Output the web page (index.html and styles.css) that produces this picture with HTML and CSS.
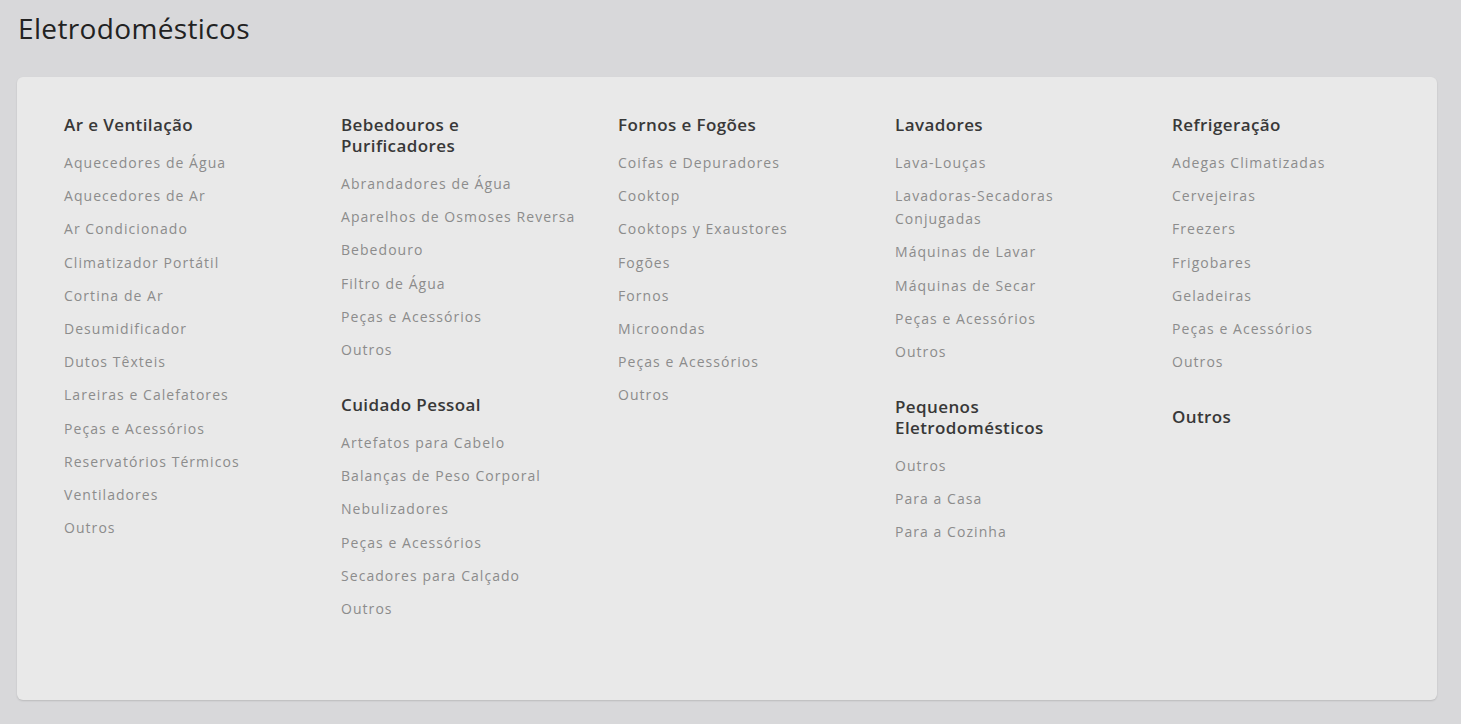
FILE: index.html
```html
<!DOCTYPE html>
<html lang="pt-BR">
<head>
<meta charset="utf-8">
<link rel="stylesheet" href="styles.css">
<title>Eletrodomésticos</title>
</head>
<body>
<h1 class="title">Eletrodomésticos</h1>
<div class="card">
  <div class="col">
    <div class="group">
      <h2 class="group-title">Ar e Ventilação</h2>
      <ul class="list">
        <li>Aquecedores de Água</li>
        <li>Aquecedores de Ar</li>
        <li>Ar Condicionado</li>
        <li>Climatizador Portátil</li>
        <li>Cortina de Ar</li>
        <li>Desumidificador</li>
        <li>Dutos Têxteis</li>
        <li>Lareiras e Calefatores</li>
        <li>Peças e Acessórios</li>
        <li>Reservatórios Térmicos</li>
        <li>Ventiladores</li>
        <li>Outros</li>
      </ul>
    </div>
  </div>
  <div class="col">
    <div class="group">
      <h2 class="group-title">Bebedouros e Purificadores</h2>
      <ul class="list">
        <li>Abrandadores de Água</li>
        <li>Aparelhos de Osmoses Reversa</li>
        <li>Bebedouro</li>
        <li>Filtro de Água</li>
        <li>Peças e Acessórios</li>
        <li>Outros</li>
      </ul>
    </div>
    <div class="group">
      <h2 class="group-title">Cuidado Pessoal</h2>
      <ul class="list">
        <li>Artefatos para Cabelo</li>
        <li>Balanças de Peso Corporal</li>
        <li>Nebulizadores</li>
        <li>Peças e Acessórios</li>
        <li>Secadores para Calçado</li>
        <li>Outros</li>
      </ul>
    </div>
  </div>
  <div class="col">
    <div class="group">
      <h2 class="group-title">Fornos e Fogões</h2>
      <ul class="list">
        <li>Coifas e Depuradores</li>
        <li>Cooktop</li>
        <li>Cooktops y Exaustores</li>
        <li>Fogões</li>
        <li>Fornos</li>
        <li>Microondas</li>
        <li>Peças e Acessórios</li>
        <li>Outros</li>
      </ul>
    </div>
  </div>
  <div class="col">
    <div class="group">
      <h2 class="group-title">Lavadores</h2>
      <ul class="list">
        <li>Lava-Louças</li>
        <li>Lavadoras-Secadoras Conjugadas</li>
        <li>Máquinas de Lavar</li>
        <li>Máquinas de Secar</li>
        <li>Peças e Acessórios</li>
        <li>Outros</li>
      </ul>
    </div>
    <div class="group">
      <h2 class="group-title">Pequenos Eletrodomésticos</h2>
      <ul class="list">
        <li>Outros</li>
        <li>Para a Casa</li>
        <li>Para a Cozinha</li>
      </ul>
    </div>
  </div>
  <div class="col">
    <div class="group">
      <h2 class="group-title">Refrigeração</h2>
      <ul class="list">
        <li>Adegas Climatizadas</li>
        <li>Cervejeiras</li>
        <li>Freezers</li>
        <li>Frigobares</li>
        <li>Geladeiras</li>
        <li>Peças e Acessórios</li>
        <li>Outros</li>
      </ul>
    </div>
    <div class="group">
      <h2 class="group-title">Outros</h2>
    </div>
  </div>
</div>
</body>
</html>
```
FILE: styles.css
```css
* { box-sizing: border-box; }
html, body { margin: 0; padding: 0; }
body {
  background: #d8d8da;
  font-family: "Open Sans", "Liberation Sans", sans-serif;
  padding: 10px 24px 0 17px;
  height: 724px;
  overflow: hidden;
}
.title {
  margin: 0 0 0 1px;
  font-size: 28px;
  line-height: 36px;
  font-weight: 400;
  color: #222;
  letter-spacing: 0.35px;
}
.card {
  margin-top: 31px;
  width: 1420px;
  height: 623px;
  background: #e9e9e9;
  border-radius: 6px;
  box-shadow: 0 1px 2px rgba(0,0,0,0.14);
  padding: 37px 0 0 47px;
  display: grid;
  grid-template-columns: repeat(5, 277px);
  align-items: start;
}
.col {
  display: flex;
  flex-direction: column;
  gap: 33px;
  padding-right: 34px;
}
.group-title {
  margin: 0;
  padding-right: 14px;
  font-size: 17px;
  line-height: 21px;
  font-weight: 600;
  color: #383838;
  letter-spacing: 0.4px;
}
.list {
  list-style: none;
  margin: 16px 0 0;
  padding: 0;
  display: flex;
  flex-direction: column;
  gap: 10.2px;
}
.list li {
  font-size: 14px;
  line-height: 23px;
  color: #8c8c8c;
  letter-spacing: 1.05px;
}
```
